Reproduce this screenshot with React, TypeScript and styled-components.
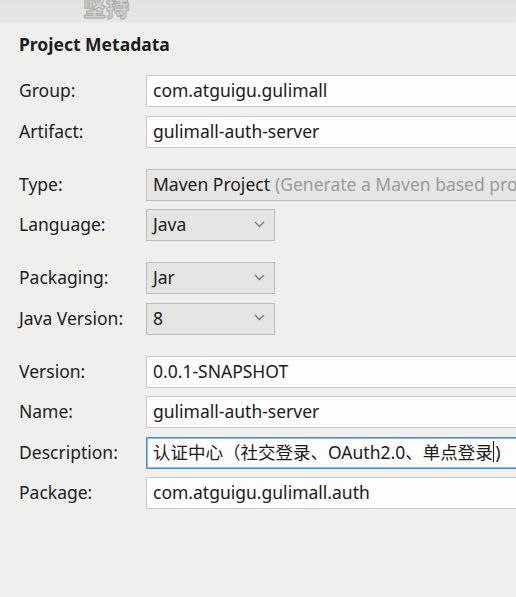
import React from "react";
import styled, { createGlobalStyle } from "styled-components";

const Global = createGlobalStyle`
  html, body { margin: 0; padding: 0; background: #efefed; overflow: hidden; }
  body { font-family: "Noto Sans", "Noto Sans CJK SC", sans-serif; color: #1b1b1b; }
`;

const Page = styled.div`
  width: 516px;
  height: 597px;
  overflow: hidden;
  background: #efefed;
`;

const TopBand = styled.div`
  position: relative;
  height: 22px;
  background: linear-gradient(#e2e2e0, #e6e6e4);
  border-bottom: 1px solid #e9e9e7;
`;

const Watermark = styled.span`
  position: absolute;
  left: 83px;
  top: -11px;
  font-family: "Noto Sans CJK SC", sans-serif;
  font-weight: 900;
  font-size: 23px;
  color: #d2d2d0;
  -webkit-text-stroke: 1px #a9a9a7;
`;

const Section = styled.div`
  padding: 9px 0 0 19px;
`;

const Title = styled.div`
  font-weight: 700;
  font-size: 17.5px;
  height: 24px;
  line-height: 24px;
  margin-bottom: 19px;
`;

const Groups = styled.div`
  display: flex;
  flex-direction: column;
  gap: 21px;
  width: 600px;
`;

const Group = styled.div`
  display: flex;
  flex-direction: column;
  gap: 8.5px;
`;

const Row = styled.div`
  display: grid;
  grid-template-columns: 127px 1fr;
  align-items: center;
  height: 32px;
`;

const Label = styled.span`
  font-size: 17.5px;
  color: #1d1d1d;
  padding-bottom: 2px;
`;

const Field = styled.div<{ $variant?: "text" | "readonly" | "focus" }>`
  box-sizing: border-box;
  height: 32px;
  display: flex;
  align-items: center;
  padding: 0 6px 2px;
  font-size: 17.5px;
  white-space: nowrap;
  overflow: hidden;
  background: ${(p) => (p.$variant === "readonly" ? "#e6e6e5" : "#fdfdfd")};
  border: 1px solid
    ${(p) =>
      p.$variant === "focus" ? "#4a8fd6" : p.$variant === "readonly" ? "#bdbdbc" : "#cacac9"};
  box-shadow: ${(p) => (p.$variant === "focus" ? "inset 0 0 0 1px #8bb8e6" : "none")};
`;

const Hint = styled.span`
  color: #9a9a9a;
  margin-left: 5px;
`;

const Caret = styled.span`
  display: inline-block;
  width: 1.5px;
  height: 21px;
  background: #111;
  margin: 0 1px 0 0;
`;

const Combo = styled.div`
  box-sizing: border-box;
  width: 129px;
  height: 32px;
  display: flex;
  align-items: center;
  justify-content: space-between;
  padding: 0 9px 2px 6px;
  background: #e5e5e4;
  border: 1px solid #bdbdbc;
  font-size: 17.5px;
`;

const Chevron = () => (
  <svg width="11" height="7" viewBox="0 0 11 7">
    <path d="M1 1 L5.5 5.5 L10 1" fill="none" stroke="#7a7a7a" strokeWidth="1.4" />
  </svg>
);

export default function App() {
  return (
    <Page>
      <Global />
      <TopBand>
        <Watermark>坚持</Watermark>
      </TopBand>
      <Section>
        <Title>Project Metadata</Title>
        <Groups>
          <Group>
            <Row>
              <Label>Group:</Label>
              <Field>com.atguigu.gulimall</Field>
            </Row>
            <Row>
              <Label>Artifact:</Label>
              <Field>gulimall-auth-server</Field>
            </Row>
          </Group>
          <Group>
            <Row>
              <Label>Type:</Label>
              <Field $variant="readonly">
                Maven Project<Hint>(Generate a Maven based project archive)</Hint>
              </Field>
            </Row>
            <Row>
              <Label>Language:</Label>
              <Combo>
                Java
                <Chevron />
              </Combo>
            </Row>
          </Group>
          <Group>
            <Row>
              <Label>Packaging:</Label>
              <Combo>
                Jar
                <Chevron />
              </Combo>
            </Row>
            <Row>
              <Label>Java Version:</Label>
              <Combo>
                8
                <Chevron />
              </Combo>
            </Row>
          </Group>
          <Group>
            <Row>
              <Label>Version:</Label>
              <Field>0.0.1-SNAPSHOT</Field>
            </Row>
            <Row>
              <Label>Name:</Label>
              <Field>gulimall-auth-server</Field>
            </Row>
            <Row>
              <Label>Description:</Label>
              <Field $variant="focus">
                认证中心（社交登录、OAuth2.0、单点登录<Caret />)
              </Field>
            </Row>
            <Row>
              <Label>Package:</Label>
              <Field>com.atguigu.gulimall.auth</Field>
            </Row>
          </Group>
        </Groups>
      </Section>
    </Page>
  );
}
